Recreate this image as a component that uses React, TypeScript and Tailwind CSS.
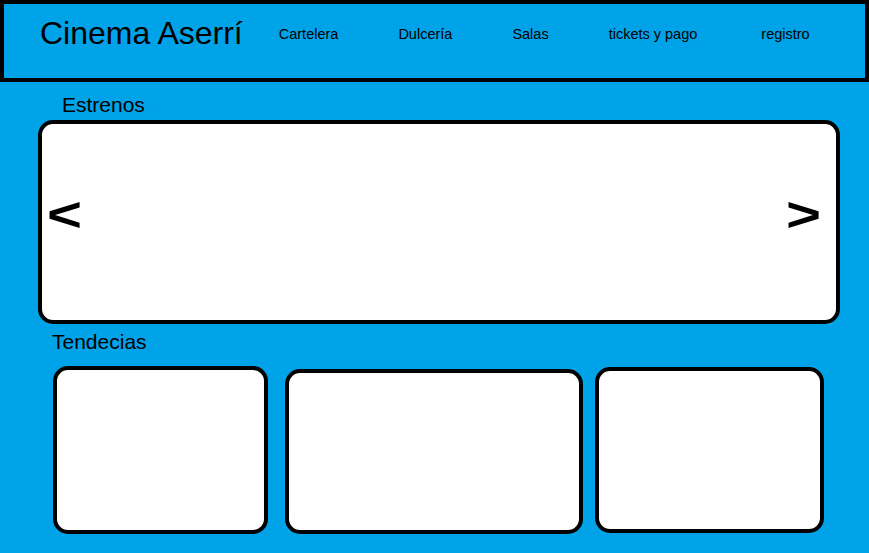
const navItems = ["Cartelera", "Dulcería", "Salas", "tickets y pago", "registro"];

export default function App() {
  return (
    <div className="min-h-screen w-full overflow-hidden bg-[#00a2e8] font-['Liberation_Sans',Arial,sans-serif] text-black">
      <header className="flex h-[82px] items-start border-4 border-black pl-9 pt-[11px]">
        <h1 className="text-[32px] leading-[37px] font-normal">Cinema Aserrí</h1>
        <nav className="ml-[36px] mt-[11px] flex gap-[60px] text-[14.5px] leading-[17px]">
          {navItems.map((item) => (
            <a key={item} href="#" className={item === "registro" ? "ml-1" : ""}>
              {item}
            </a>
          ))}
        </nav>
      </header>

      <section>
        <h2 className="ml-[62px] mt-[11px] text-[21px] leading-[23px] font-normal">Estrenos</h2>
        <div className="ml-[38px] mt-[4px] flex h-[204px] w-[802px] items-center justify-between rounded-[15px] border-4 border-black bg-white pb-[14px] pl-[5px] pr-[15px]">
          <button type="button" className="scale-y-[0.8] text-[60px] leading-[60px] font-bold">
            &lt;
          </button>
          <button type="button" className="scale-y-[0.8] text-[60px] leading-[60px] font-bold">
            &gt;
          </button>
        </div>
      </section>

      <section>
        <h2 className="ml-[52px] mt-[6px] text-[21px] leading-[23px] font-normal">Tendecias</h2>
        <div className="ml-[53px] mt-[13px] flex items-start">
          <div className="h-[168px] w-[215px] rounded-[15px] border-4 border-black bg-white" />
          <div className="ml-[17px] mt-[3px] h-[165px] w-[298px] rounded-[15px] border-4 border-black bg-white" />
          <div className="ml-[12px] mt-[1px] h-[166px] w-[229px] rounded-[15px] border-4 border-black bg-white" />
        </div>
      </section>
    </div>
  );
}
